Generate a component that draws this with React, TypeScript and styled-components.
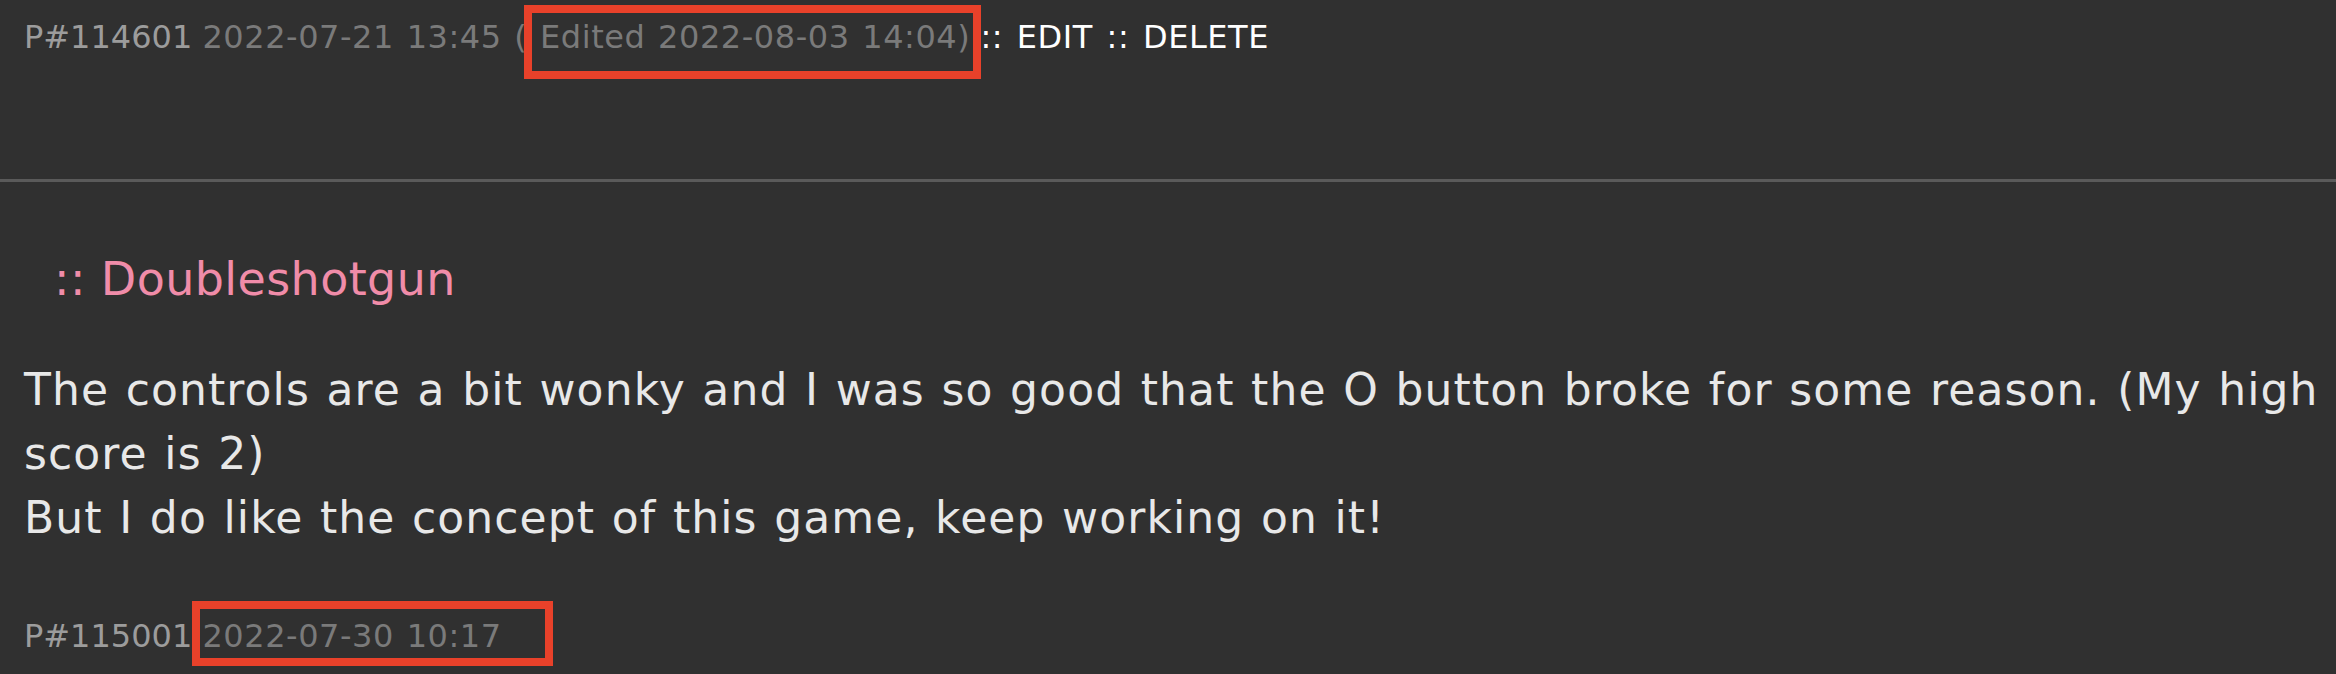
import React from "react";
import styled, { createGlobalStyle } from "styled-components";

const GlobalStyle = createGlobalStyle`
  html, body {
    margin: 0;
    padding: 0;
    background: #303030;
  }
  body {
    font-family: "DejaVu Sans", Verdana, sans-serif;
  }
`;

const Page = styled.div`
  width: 2336px;
  min-height: 674px;
  background: #303030;
  padding-top: 19px;
  box-sizing: border-box;
  overflow: hidden;
`;

const MetaLine = styled.div<{ $gap?: number }>`
  padding: 0 24px;
  font-size: 32px;
  line-height: 37px;
  white-space: nowrap;
  margin-top: ${(p) => p.$gap ?? 0}px;
`;

const PostId = styled.span`
  color: #9c9c9c;
`;

const Stamp = styled.span`
  color: #7a7a7a;
  letter-spacing: 0.55px;
  word-spacing: 2px;
`;

const Actions = styled.span`
  color: #ffffff;
  letter-spacing: 0.55px;
  word-spacing: 3px;
`;

const Marked = styled.span<{
  $top: number;
  $right: number;
  $bottom: number;
  $left: number;
}>`
  position: relative;
  &::after {
    content: "";
    position: absolute;
    top: ${(p) => p.$top}px;
    right: ${(p) => p.$right}px;
    bottom: ${(p) => p.$bottom}px;
    left: ${(p) => p.$left}px;
    border: 8px solid #e8412a;
    pointer-events: none;
  }
`;

const Divider = styled.hr`
  margin: 123px 0 0;
  border: 0;
  height: 3px;
  background: #5a5a5a;
`;

const Author = styled.div`
  margin-top: 70px;
  padding-left: 54px;
  font-size: 46px;
  line-height: 54px;
  letter-spacing: 0.4px;
  color: #f08ca9;
`;

const Body = styled.div`
  margin-top: 52px;
  padding: 0 0 0 24px;
  font-size: 44px;
  line-height: 64px;
  letter-spacing: 1.1px;
  word-spacing: 1.5px;
  color: #e8e8e8;
`;

export default function App() {
  return (
    <>
      <GlobalStyle />
      <Page>
        <MetaLine>
          <PostId>P#114601</PostId>{" "}
          <Stamp>
            2022-07-21 13:45 ({" "}
            <Marked $top={-13} $right={-11} $bottom={-23} $left={-16}>
              Edited 2022-08-03 14:04)
            </Marked>
          </Stamp>{" "}
          <Actions>:: EDIT :: DELETE</Actions>
        </MetaLine>
        <Divider />
        <Author>:: Doubleshotgun</Author>
        <Body>
          The controls are a bit wonky and I was so good that the O button broke
          for some reason. (My high score is 2)
          <br />
          But I do like the concept of this game, keep working on it!
        </Body>
        <MetaLine $gap={68}>
          <PostId>P#115001</PostId>{" "}
          <Stamp>
            <Marked $top={-16} $right={-51} $bottom={-11} $left={-10}>
              2022-07-30 10:17
            </Marked>
          </Stamp>
        </MetaLine>
      </Page>
    </>
  );
}
